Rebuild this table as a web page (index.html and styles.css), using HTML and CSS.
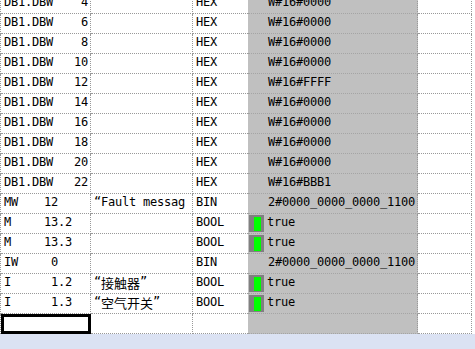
FILE: index.html
```html
<!DOCTYPE html>
<html>
<head>
<meta charset="utf-8">
<link rel="stylesheet" href="styles.css">
</head>
<body>
<div class="vat">
  <div class="row"><div class="c c1 db"><span>DB1.DBW</span><span>4</span></div><div class="c c2"></div><div class="c c3">HEX</div><div class="c c4"><span class="val">W#16#0000</span></div><div class="c c5"></div></div>
  <div class="row"><div class="c c1 db"><span>DB1.DBW</span><span>6</span></div><div class="c c2"></div><div class="c c3">HEX</div><div class="c c4"><span class="val">W#16#0000</span></div><div class="c c5"></div></div>
  <div class="row"><div class="c c1 db"><span>DB1.DBW</span><span>8</span></div><div class="c c2"></div><div class="c c3">HEX</div><div class="c c4"><span class="val">W#16#0000</span></div><div class="c c5"></div></div>
  <div class="row"><div class="c c1 db"><span>DB1.DBW</span><span>10</span></div><div class="c c2"></div><div class="c c3">HEX</div><div class="c c4"><span class="val">W#16#0000</span></div><div class="c c5"></div></div>
  <div class="row"><div class="c c1 db"><span>DB1.DBW</span><span>12</span></div><div class="c c2"></div><div class="c c3">HEX</div><div class="c c4"><span class="val">W#16#FFFF</span></div><div class="c c5"></div></div>
  <div class="row"><div class="c c1 db"><span>DB1.DBW</span><span>14</span></div><div class="c c2"></div><div class="c c3">HEX</div><div class="c c4"><span class="val">W#16#0000</span></div><div class="c c5"></div></div>
  <div class="row"><div class="c c1 db"><span>DB1.DBW</span><span>16</span></div><div class="c c2"></div><div class="c c3">HEX</div><div class="c c4"><span class="val">W#16#0000</span></div><div class="c c5"></div></div>
  <div class="row"><div class="c c1 db"><span>DB1.DBW</span><span>18</span></div><div class="c c2"></div><div class="c c3">HEX</div><div class="c c4"><span class="val">W#16#0000</span></div><div class="c c5"></div></div>
  <div class="row"><div class="c c1 db"><span>DB1.DBW</span><span>20</span></div><div class="c c2"></div><div class="c c3">HEX</div><div class="c c4"><span class="val">W#16#0000</span></div><div class="c c5"></div></div>
  <div class="row"><div class="c c1 db"><span>DB1.DBW</span><span>22</span></div><div class="c c2"></div><div class="c c3">HEX</div><div class="c c4"><span class="val">W#16#BBB1</span></div><div class="c c5"></div></div>
  <div class="row"><div class="c c1"><span class="op">MW</span><span class="int">12</span></div><div class="c c2">“Fault messag</div><div class="c c3">BIN</div><div class="c c4"><span class="val">2#0000_0000_0000_1100</span></div><div class="c c5"></div></div>
  <div class="row"><div class="c c1"><span class="op">M</span><span class="int">13</span><span>.2</span></div><div class="c c2"></div><div class="c c3">BOOL</div><div class="c c4"><span class="led"><span class="on"></span></span><span>true</span></div><div class="c c5"></div></div>
  <div class="row"><div class="c c1"><span class="op">M</span><span class="int">13</span><span>.3</span></div><div class="c c2"></div><div class="c c3">BOOL</div><div class="c c4"><span class="led"><span class="on"></span></span><span>true</span></div><div class="c c5"></div></div>
  <div class="row"><div class="c c1"><span class="op">IW</span><span class="int">0</span></div><div class="c c2"></div><div class="c c3">BIN</div><div class="c c4"><span class="val">2#0000_0000_0000_1100</span></div><div class="c c5"></div></div>
  <div class="row"><div class="c c1"><span class="op">I</span><span class="int">1</span><span>.2</span></div><div class="c c2">“<span class="cjk">接触器</span>”</div><div class="c c3">BOOL</div><div class="c c4"><span class="led"><span class="on"></span></span><span>true</span></div><div class="c c5"></div></div>
  <div class="row"><div class="c c1"><span class="op">I</span><span class="int">1</span><span>.3</span></div><div class="c c2">“<span class="cjk">空气开关</span>”</div><div class="c c3">BOOL</div><div class="c c4"><span class="led"><span class="on"></span></span><span>true</span></div><div class="c c5"></div></div>
  <div class="row"><div class="c c1 sel"></div><div class="c c2"></div><div class="c c3"></div><div class="c c4"></div><div class="c c5"></div></div>
</div>
<div class="footer"></div>
</body>
</html>
```
FILE: styles.css
```css
html, body {
  margin: 0;
  padding: 0;
  background: #fff;
  overflow: hidden;
}
body {
  font-family: "DejaVu Sans Mono", "Noto Sans CJK SC", monospace;
  font-size: 12px;
  letter-spacing: -0.22px;
  color: #000;
}
.vat {
  margin-top: -6px;
  display: flex;
  flex-direction: column;
}
.row {
  display: flex;
  height: 20px;
  border-left: 1px dotted #999;
  width: 472px;
  box-sizing: border-box;
}
.c {
  box-sizing: border-box;
  height: 20px;
  border-bottom: 1px dotted #999;
  line-height: 17px;
  display: flex;
  align-items: flex-start;
  white-space: pre;
  overflow: hidden;
}
.c1 {
  width: 90px;
  border-right: 1px dotted #999;
  padding-left: 3px;
  padding-right: 2px;
}
.c1.db {
  justify-content: space-between;
}
.op {
  width: 33px;
}
.int {
  width: 21px;
  text-align: right;
}
.c2 {
  width: 102px;
  border-right: 1px dotted #999;
  padding-left: 3px;
}
.cjk {
  font-family: "Noto Sans CJK SC", sans-serif;
  font-size: 13px;
  letter-spacing: 0;
}
.c3 {
  width: 55px;
  padding-left: 3px;
}
.c4 {
  width: 170px;
  background: #c0c0c0;
  border-right: 1px dotted #999;
  border-bottom-color: #a4a4a4;
  padding-left: 1px;
}
.val {
  padding-left: 19px;
}
.led {
  width: 15px;
  height: 17px;
  margin-top: 1px;
  margin-right: 3px;
  background: #808080;
  box-sizing: border-box;
  padding: 2px 3px 1px 5px;
  display: flex;
}
.on {
  width: 7px;
  height: 14px;
  background: #00ff00;
}
.c5 {
  width: 54px;
  border-right: 1px dotted #999;
}
.sel {
  outline: 3px solid #000;
  outline-offset: -3px;
}
.footer {
  height: 20px;
  background: #dbe2f3;
}
```
